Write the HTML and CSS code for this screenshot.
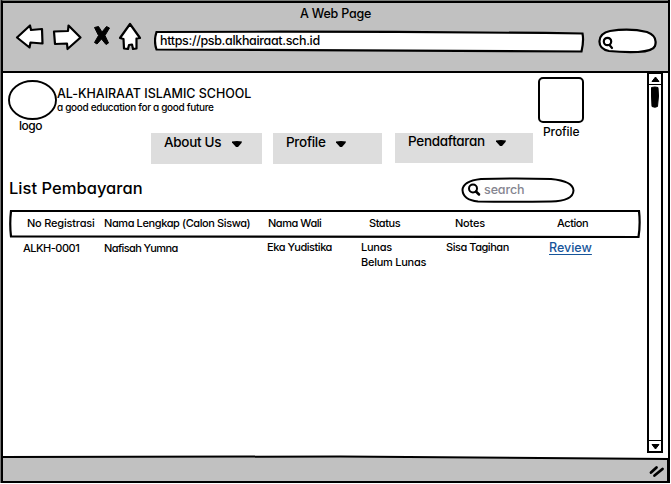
FILE: index.html
```html
<!DOCTYPE html>
<html lang="id">
<head>
<meta charset="utf-8">
<title>A Web Page</title>
<link rel="stylesheet" href="styles.css">
</head>
<body>
<div class="window">
  <header class="chrome">
    <div class="title"><span class="t-title">A Web Page</span></div>
    <div class="toolbar">
      <svg class="tools" width="154" height="36" viewBox="0 20 154 36">
        <g fill="#fff" stroke="#000" stroke-width="2.2" stroke-linejoin="round">
          <path d="M17 37.500L30 25.500L31 30L42 29L42.500 43.500L30.500 42.500L29.500 47.500Z"/>
          <path d="M54 31.500L68 31L68.500 25.500L80.500 37.500L67.500 49L67 43.500L55 44Z"/>
          <path d="M130 24L140 38L136.500 38.500L136.500 48.500L133 49L132 44.500L129 45L128 49L124 48.500L123.500 39L120 38Z"/>
        </g>
        <path d="M94.500 27.500L98.500 26.500L102 32L106.500 26.500L109.500 28L105 35.500L108.500 43L106 44.500L101.500 39L97 44L94.500 42.500L98.500 35.500Z" stroke="#000" stroke-linejoin="round"/>
      </svg>
      <div class="address">
        <svg class="shape" width="431" height="24" viewBox="0 0 431 24"><path d="M2.500 2Q220 1 428.500 3.500Q430 11 427.500 21.500Q200 20.500 2.500 19.500Q-.5 11 2.500 2Z" fill="#fff" stroke="#000" stroke-width="2.200"/></svg>
        <span class="t-url">https://psb.alkhairaat.sch.id</span>
      </div>
      <svg class="find" width="60" height="26" viewBox="0 0 60 26">
        <path d="M12 3Q32 0 49 4Q60 8 57 18Q55 23 40 24Q25 24.500 11 23Q1 21 1.500 13Q2 5 12 3Z" fill="#fff" stroke="#000" stroke-width="2.200"/>
        <path d="M11.500 17L14 20" stroke="#000" stroke-width="2.200" stroke-linecap="round"/>
        <circle cx="9.500" cy="13.500" r="3.700" fill="none" stroke="#000" stroke-width="2.200"/>
      </svg>
    </div>
  </header>

  <div class="viewport">
    <main class="page">
      <div class="masthead">
        <div class="logo">
          <svg width="50" height="41" viewBox="0 0 50 41"><ellipse cx="24.500" cy="20" rx="23.500" ry="19" fill="#fff" stroke="#000" stroke-width="1.900"/></svg>
          <span class="t-logo">logo</span>
        </div>
        <div class="school">
          <div class="t-school">AL-KHAIRAAT ISLAMIC SCHOOL</div>
          <div class="t-motto">a good education for a good future</div>
        </div>
        <div class="profile">
          <div class="avatar"></div>
          <span class="t-profile">Profile</span>
        </div>
      </div>

      <nav class="menu">
        <div class="item about"><span class="t-about">About Us</span><svg class="caret" width="12" height="8" viewBox="0 0 12 8"><path d="M1 1.500Q6 .5 11 1.500L10.500 3L7 7H5L1 2.500Z"/></svg></div>
        <div class="item prof"><span class="t-prof">Profile</span><svg class="caret" width="12" height="8" viewBox="0 0 12 8"><path d="M1 1.500Q6 .5 11 1.500L10.500 3L7 7H5L1 2.500Z"/></svg></div>
        <div class="item reg"><span class="t-reg">Pendaftaran</span><svg class="caret" width="12" height="8" viewBox="0 0 12 8"><path d="M1 1.500Q6 .5 11 1.500L10.500 3L7 7H5L1 2.500Z"/></svg></div>
      </nav>

      <div class="heading">
        <h1 class="t-list">List Pembayaran</h1>
        <div class="search">
          <svg class="shape" width="114" height="27" viewBox="0 0 114 27"><path d="M20 2Q55 1 90 2Q112 4 112.500 13.500Q112 24 90 24.500Q52 25 17 24.500Q2 23 1.500 13Q2 4 20 2Z" fill="#fff" stroke="#000" stroke-width="2"/></svg>
          <svg class="lens" width="14" height="14" viewBox="0 0 14 14"><circle cx="6" cy="5.500" r="4" fill="none" stroke="#000" stroke-width="2"/><path d="M9 8.500L12 11.500" stroke="#000" stroke-width="2.500" stroke-linecap="round"/></svg>
          <span class="t-search">search</span>
        </div>
      </div>

      <div class="table">
        <div class="row head">
          <svg class="shape" width="634" height="32" viewBox="0 0 634 32"><path d="M2 3Q300 2.500 630 3Q631.500 16 629.500 29Q300 28.500 2 28.500Q.5 16 2 3Z" fill="none" stroke="#000" stroke-width="2.200"/></svg>
          <span class="h1">No Registrasi</span>
          <span class="h2">Nama Lengkap (Calon Siswa)</span>
          <span class="h3">Nama Wali</span>
          <span class="h4">Status</span>
          <span class="h5">Notes</span>
          <span class="h6">Action</span>
        </div>
        <div class="row data">
          <span class="d1">ALKH-0001</span>
          <span class="d2">Nafisah Yumna</span>
          <span class="d3">Eka Yudistika</span>
          <span class="d4">Lunas<br>Belum Lunas</span>
          <span class="d5">Sisa Tagihan</span>
          <span class="d6"><a class="review">Review</a></span>
        </div>
      </div>
    </main>

    <div class="scrollbar">
      <div class="btn"><svg width="9" height="7" viewBox="0 0 9 7"><path d="M4.500 1L8 5.500H1Z" stroke="#000"/></svg></div>
      <div class="track"><svg width="10" height="22" viewBox="0 0 10 22"><path d="M1.500 1.500Q5 .5 8 1.500L8.500 10L7.500 20.500Q5 22 2 20.500L1.500 10Z" stroke="#000"/></svg></div>
      <div class="btn"><svg width="9" height="7" viewBox="0 0 9 7"><path d="M4.500 6L8 1.500H1Z" stroke="#000"/></svg></div>
    </div>
  </div>

  <footer class="status">
    <svg class="shape" width="669" height="30" viewBox="0 0 669 30"><path d="M2 2L340 1.500L668 4V27H2Z" fill="#c1c1c1" stroke="#000" stroke-width="2"/></svg>
    <svg class="grip" width="18" height="14" viewBox="0 0 18 14"><path d="M3 8.500L8.500 3.500M6.500 11.500L14.500 5" stroke="#000" stroke-width="2.800" stroke-linecap="round"/></svg>
  </footer>
</div>
</body>
</html>
```

FILE: styles.css
```css
* { box-sizing: border-box; }

body {
  margin: 0;
  width: 671px;
  height: 484px;
  background: #fff;
  color: #000;
  font: 500 11px/16px Inter, "Open Sans", sans-serif;
  font-feature-settings: "cv11" 1, "ss03" 1;
  white-space: nowrap;
}

svg { display: block; flex: none; }

.window {
  display: flex;
  flex-direction: column;
  width: 670px;
  height: 483px;
  border-right: 2px solid #000;
  box-shadow: inset 1px 0 #777, inset 3px 0 #000;
}

.chrome {
  height: 73px;
  margin-left: 1px;
  background: #c1c1c1;
  border-top: 1px solid #7b7e7b;
  border-bottom: 2px solid #000;
  border-left: 2px solid #000;
  box-shadow: inset 0 2px #000;
}

.title { padding: 5px 0 0 297px; height: 26px; font-size: 12.500px; letter-spacing: -.22px; }
.toolbar { display: flex; margin-left: -3px; }
.tools { margin-top: -7px; }
.address { position: relative; width: 431px; margin-top: 3px; padding: 2px 0 0 6px; font-size: 12.500px; line-height: 17px; height: 24px; }
.address span { position: relative; letter-spacing: -.34px; }
.shape { position: absolute; top: 0; left: 0; }
.find { margin: 1px 0 0 13px; }

.viewport { display: flex; height: 382px; }
.page { flex: 1; min-width: 0; }

.masthead { display: flex; height: 60px; padding-left: 8px; }
.logo { width: 49px; padding-top: 7px; }
.logo span { display: block; margin: -3px 0 0 11px; font-size: 12px; letter-spacing: -.45px; }
.school { width: 481px; padding-top: 13px; }
.t-school { font-size: 12.500px; line-height: 16px; letter-spacing: -.03px; }
.t-motto { margin-top: -1px; font-size: 10px; line-height: 12px; letter-spacing: -.32px; }
.profile { padding-top: 4px; }
.avatar { width: 46px; height: 46px; border: 2px solid #000; border-radius: 5px; }
.profile span { display: block; margin: 1px 0 0 5px; font-size: 12px; letter-spacing: -.1px; }

.menu { display: flex; align-items: flex-start; padding-left: 151px; height: 43px; }
.item { display: flex; height: 31px; padding: 0 0 0 13px; background: #ddd; font-size: 13.500px; line-height: 18px; letter-spacing: -.3px; }
.item span { flex: none; }
.about { width: 111px; margin-right: 11px; }
.prof { width: 109px; margin-right: 13px; }
.reg { width: 138px; height: 30px; }
.about span { width: 66px; }
.prof span { width: 48px; }
.reg span { width: 86px; line-height: 17px; }
.caret { margin: 7px 0 0 1px; }
.reg .caret { margin-top: 6px; }

.heading { display: flex; height: 32px; padding-left: 9px; }
h1 { width: 452px; margin: 1px 0 0; font-size: 16.500px; line-height: 22px; font-weight: 500; letter-spacing: .03px; }
.search { position: relative; display: flex; width: 114px; height: 27px; margin-top: 1px; padding: 5px 0 0 6px; }
.lens { position: relative; margin-top: 1px; }
.search span { position: relative; margin: 0 0 0 3px; font-size: 12.500px; letter-spacing: -.1px; color: #858590; }

.table { margin-left: 9px; }
.row { display: grid; grid-template-columns: 81px 163px 94px 85px 103px 90px; padding-left: 14px; line-height: 15px; font-size: 11px; }
.head { position: relative; height: 32px; padding-top: 8px; }
.h1 { padding-left: 4px; letter-spacing: -.2px; }
.h2 { letter-spacing: -.4px; }
.h3 { padding-left: 1px; letter-spacing: -.45px; }
.h4 { padding-left: 8px; letter-spacing: -.45px; }
.h5 { padding-left: 9px; letter-spacing: -.2px; }
.h6 { padding-left: 8px; letter-spacing: -.45px; }
.d1, .d2 { padding-top: 1px; }
.d1 { letter-spacing: -.5px; }
.d2 { letter-spacing: -.6px; }
.d3, .d5 { letter-spacing: -.45px; }
.d4 { letter-spacing: -.25px; }
.review { font-size: 12.500px; color: #17559a; text-decoration: underline; text-underline-offset: 2px; }

.scrollbar { display: flex; flex-direction: column; width: 16px; height: 380px; margin-right: 5px; border: 2px solid #000; border-top: 1px solid #000; flex: none; }
.btn { display: flex; justify-content: center; align-items: center; height: 10px; }
.track { flex: 1; display: flex; justify-content: center; padding-top: 1px; border: solid #000; border-width: 1px 0; }

.status { position: relative; height: 28px; }
.grip { position: absolute; left: 648px; top: 9px; }
```
